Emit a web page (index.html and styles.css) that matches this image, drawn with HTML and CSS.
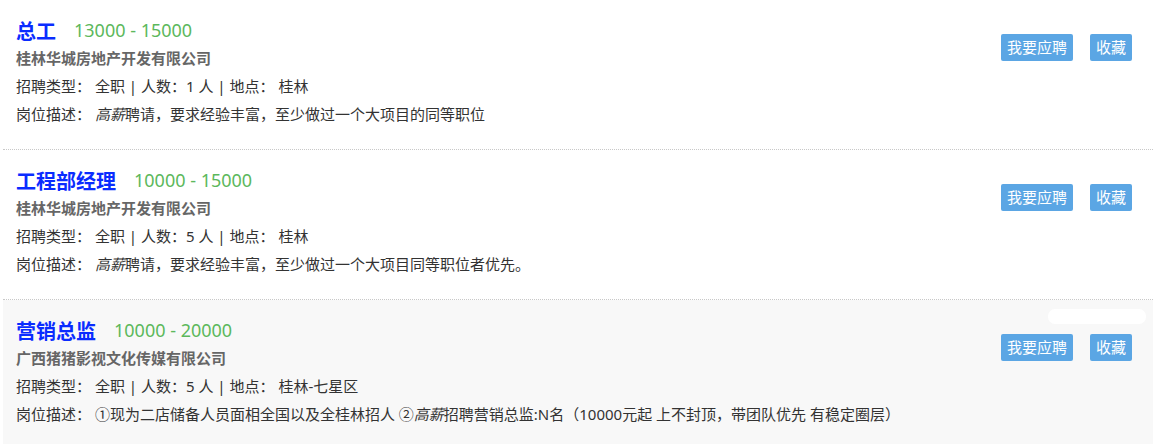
FILE: index.html
```html
<!DOCTYPE html>
<html lang="zh-CN">
<head>
<meta charset="utf-8">
<title>职位列表</title>
<link rel="stylesheet" href="styles.css">
</head>
<body>
<div class="list">
  <div class="job">
    <div class="info">
      <div class="head"><span class="title">总工</span><span class="salary">13000 - 15000</span></div>
      <div class="company">桂林华城房地产开发有限公司</div>
      <div class="line">招聘类型： 全职 | 人数：1 人 | 地点： 桂林</div>
      <div class="line">岗位描述： <em>高薪</em>聘请，要求经验丰富，至少做过一个大项目的同等职位</div>
    </div>
    <div class="actions"><a class="btn">我要应聘</a><a class="btn">收藏</a></div>
  </div>
  <div class="job">
    <div class="info">
      <div class="head"><span class="title">工程部经理</span><span class="salary">10000 - 15000</span></div>
      <div class="company">桂林华城房地产开发有限公司</div>
      <div class="line">招聘类型： 全职 | 人数：5 人 | 地点： 桂林</div>
      <div class="line">岗位描述： <em>高薪</em>聘请，要求经验丰富，至少做过一个大项目同等职位者优先。</div>
    </div>
    <div class="actions"><a class="btn">我要应聘</a><a class="btn">收藏</a></div>
  </div>
  <div class="job hover">
    <div class="blob"></div>
    <div class="info">
      <div class="head"><span class="title">营销总监</span><span class="salary">10000 - 20000</span></div>
      <div class="company">广西猪猪影视文化传媒有限公司</div>
      <div class="line">招聘类型： 全职 | 人数：5 人 | 地点： 桂林-七星区</div>
      <div class="line">岗位描述： ①现为二店储备人员面相全国以及全桂林招人 ②<em>高薪</em>招聘营销总监:N名（10000元起 上不封顶，带团队优先 有稳定圈层）</div>
    </div>
    <div class="actions"><a class="btn">我要应聘</a><a class="btn">收藏</a></div>
  </div>
</div>
</body>
</html>
```
FILE: styles.css
```css
html, body {
  margin: 0;
  padding: 0;
  background: #fff;
}
body {
  font-family: "Noto Sans", "Noto Sans CJK SC", sans-serif;
  color: #333;
}
.list {
  padding-left: 3px;
}
.job {
  position: relative;
  display: flex;
  justify-content: space-between;
  box-sizing: border-box;
  height: 150px;
  padding: 17px 21px 0 13px;
  border-bottom: 1px dotted #c8c8c8;
}
.job.hover {
  background: #f8f8f8;
  border-bottom: none;
}
.head {
  height: 27px;
  line-height: 27px;
  display: flex;
  align-items: center;
}
.title {
  font-family: "Noto Sans CJK SC", sans-serif;
  font-size: 20px;
  font-weight: bold;
  color: #0a2cff;
}
.salary {
  margin-left: 18px;
  font-size: 18px;
  color: #5cb85c;
}
.company {
  line-height: 28px;
  font-size: 15px;
  font-weight: bold;
  color: #666;
}
.line {
  line-height: 28px;
  font-size: 15px;
  color: #333;
}
.line em {
  font-style: italic;
}
.actions {
  display: flex;
  gap: 17px;
  margin-top: 17px;
  align-items: flex-start;
}
.btn {
  display: block;
  height: 27px;
  line-height: 27px;
  padding: 0 6px;
  font-size: 15px;
  color: #fff;
  background: #5ba6e4;
  border-radius: 2px;
  cursor: pointer;
}
.blob {
  position: absolute;
  left: 1045px;
  top: 9px;
  width: 98px;
  height: 15px;
  background: #fff;
  border-radius: 7px;
}
```
